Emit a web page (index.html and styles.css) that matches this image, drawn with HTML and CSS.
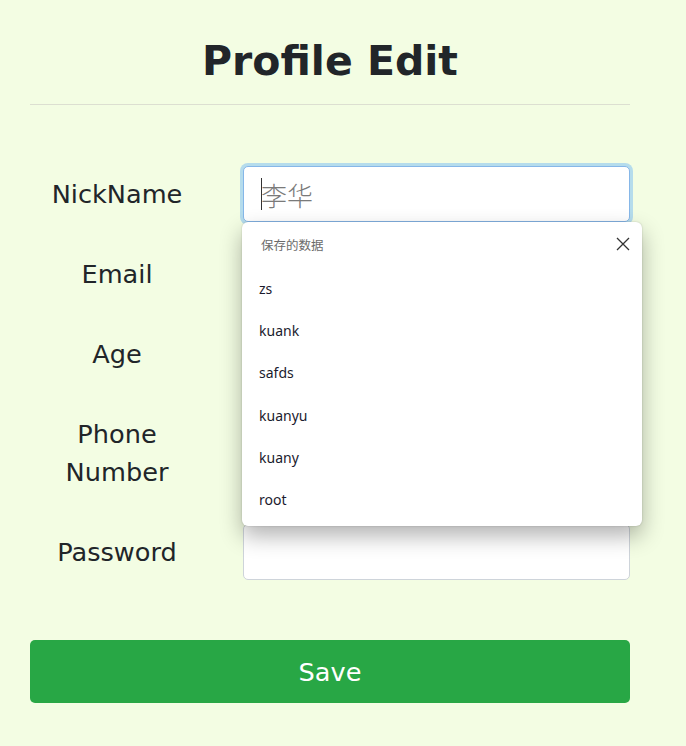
FILE: index.html
```html
<!DOCTYPE html>
<html lang="en">
<head>
<meta charset="utf-8">
<title>Profile Edit</title>
<link rel="stylesheet" href="styles.css">
</head>
<body>
<main class="page">
  <h1 class="title">Profile Edit</h1>
  <hr class="rule">
  <form class="form">
    <div class="row">
      <label class="label">NickName</label>
      <div class="field">
        <div class="input focused"><span class="caret"></span><span class="placeholder">李华</span></div>
        <div class="autofill">
          <div class="af-head"><span class="af-title">保存的数据</span>
            <svg class="af-close" width="14" height="14" viewBox="0 0 14 14"><path d="M1 1L13 13M13 1L1 13" stroke="#333" stroke-width="1.3" fill="none"/></svg>
          </div>
          <div class="af-item">zs</div>
          <div class="af-item">kuank</div>
          <div class="af-item">safds</div>
          <div class="af-item">kuanyu</div>
          <div class="af-item">kuany</div>
          <div class="af-item">root</div>
        </div>
      </div>
    </div>
    <div class="row">
      <label class="label">Email</label>
      <div class="field"><div class="input"></div></div>
    </div>
    <div class="row">
      <label class="label">Age</label>
      <div class="field"><div class="input"></div></div>
    </div>
    <div class="row">
      <label class="label">Phone<br>Number</label>
      <div class="field"><div class="input"></div></div>
    </div>
    <div class="row">
      <label class="label">Password</label>
      <div class="field"><div class="input"></div></div>
    </div>
    <button type="button" class="save">Save</button>
  </form>
</main>
</body>
</html>
```
FILE: styles.css
```css
html, body {
  margin: 0;
  padding: 0;
  background: #f3fde3;
}
body {
  font-family: "DejaVu Sans", Verdana, sans-serif;
  color: #212529;
}
.page {
  width: 600px;
  margin: 0 30px;
  padding-top: 34px;
}
.title {
  margin: 0;
  text-align: center;
  font-size: 41px;
  font-weight: bold;
  line-height: 54px;
}
.rule {
  margin: 16px 0 0 0;
  border: 0;
  border-top: 1px solid #dcdfd1;
  height: 0;
}
.form {
  margin-top: 60px;
  display: flex;
  flex-direction: column;
  gap: 22px;
}
.row {
  display: flex;
  align-items: center;
  gap: 39px;
}
.label {
  width: 174px;
  flex: none;
  text-align: center;
  font-size: 25.6px;
  line-height: 38px;
  padding: 10px 0;
}
.field {
  flex: 1;
  position: relative;
}
.input {
  box-sizing: border-box;
  height: 56px;
  background: #fff;
  border: 1px solid #ced4da;
  border-radius: 5px;
  display: flex;
  align-items: center;
  padding-left: 16px;
}
.input.focused {
  border-color: #86b7e8;
  box-shadow: 0 0 0 3px #b5dcec;
}
.caret {
  width: 1px;
  height: 32px;
  background: #333;
  margin-left: 1px;
}
.placeholder {
  font-family: "Noto Sans CJK SC", sans-serif;
  font-size: 26px;
  font-weight: 300;
  color: #7a7a7a;
  margin-left: -1px;
}
.autofill {
  position: absolute;
  left: -1px;
  top: 56px;
  width: 400px;
  background: #fff;
  border-radius: 6px;
  box-shadow: 0 10px 22px rgba(0,0,0,0.3), 0 0 2px rgba(0,0,0,0.2);
  padding-bottom: 5px;
  z-index: 5;
  font-family: "Noto Sans", "Noto Sans CJK SC", sans-serif;
}
.af-head {
  height: 44px;
  margin-bottom: 2px;
  display: flex;
  align-items: center;
  justify-content: space-between;
  padding: 0 12px 0 19px;
}
.af-title {
  font-family: "Noto Sans CJK SC", sans-serif;
  font-size: 12.5px;
  color: #6b6b6b;
}
.af-item {
  height: 42.2px;
  line-height: 42px;
  padding-left: 17px;
  font-size: 14px;
  color: #1b1b2e;
}
.save {
  margin-top: 37px;
  height: 63px;
  width: 600px;
  border: 0;
  border-radius: 5px;
  background: #28a745;
  color: #fff;
  font-family: "DejaVu Sans", Verdana, sans-serif;
  font-size: 25.6px;
}
```
